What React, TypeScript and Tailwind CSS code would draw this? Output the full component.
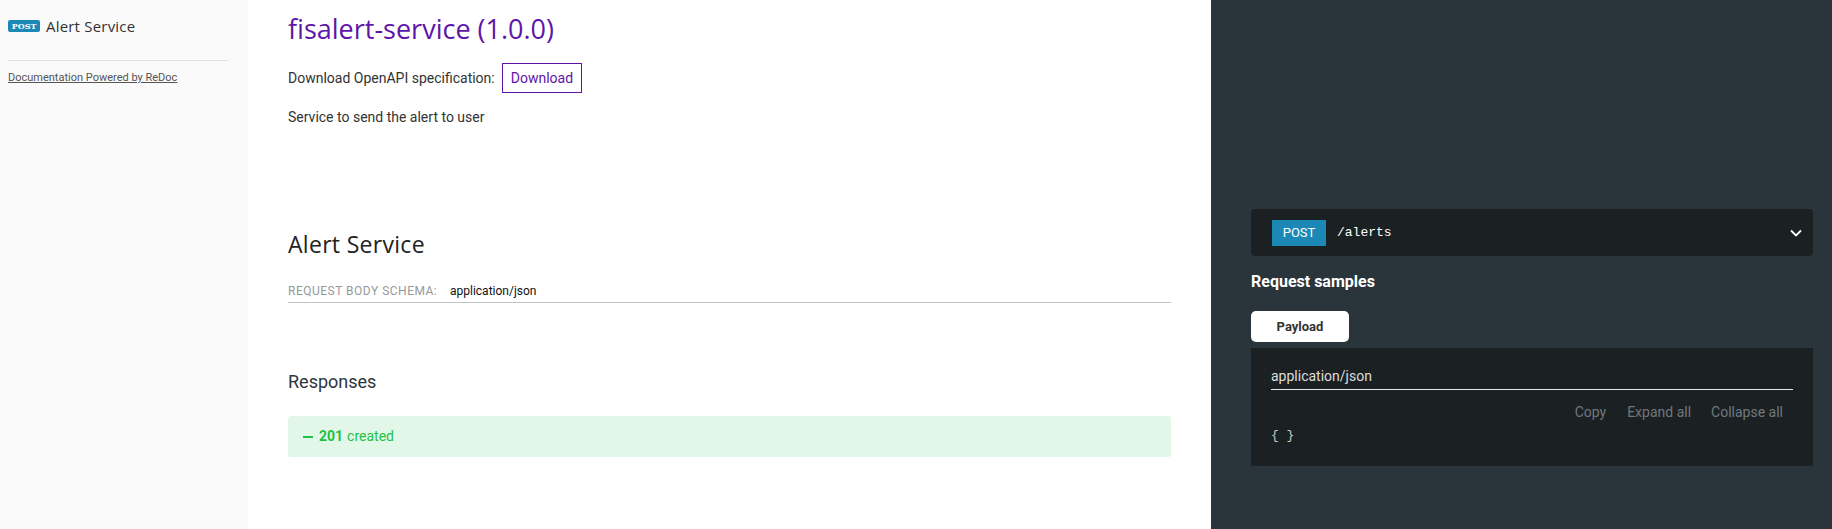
import React from "react";

const roboto = { fontFamily: "Roboto, 'Liberation Sans', sans-serif" };

export default function App() {
  return (
    <div className="flex h-[529px] w-[1832px] overflow-hidden" style={roboto}>
      {/* Sidebar */}
      <aside className="w-[248px] shrink-0 bg-[#fafafa]">
        <div className="flex items-center pl-[8px] pt-[17px]">
          <span
            className="flex h-[12px] w-[32px] items-center justify-center rounded-[2px] bg-[#1b88b5] text-[8px] font-bold leading-none text-white"
            style={{ fontFamily: "'DejaVu Serif', serif" }}
          >
            POST
          </span>
          <span
            className="ml-[6px] text-[15px] leading-[18px] tracking-[0.2px] text-[#333333]"
            style={{ fontFamily: "'Open Sans', sans-serif" }}
          >
            Alert Service
          </span>
        </div>
        <div className="ml-[8px] mr-[20px] mt-[25px] border-t border-[#e1e1e1]" />
        <div className="pl-[8px] pt-[3px]">
          <a className="text-[11px] leading-[14px] text-[#555555] underline">
            Documentation Powered by ReDoc
          </a>
        </div>
      </aside>

      {/* Middle */}
      <main className="w-[963px] shrink-0 bg-white px-[40px] pt-[13px]">
        <h1
          className="text-[27px] leading-[31px] text-[#5e16a8]"
          style={{ fontFamily: "'Open Sans', sans-serif" }}
        >
          fisalert-service (1.0.0)
        </h1>
        <div className="mt-[19px] flex h-[30px] items-center text-[14px] text-[#333333]">
          <span>Download OpenAPI specification:</span>
          <span className="ml-[7px] flex h-[30px] items-center border border-[#5e16a8] px-[8px] text-[#5e16a8]">
            Download
          </span>
        </div>
        <p className="mt-[14px] text-[14px] leading-[20px] text-[#333333]">
          Service to send the alert to user
        </p>
        <h2
          className="mt-[103px] text-[23px] leading-[28px] tracking-[0.3px] text-[#222222]"
          style={{ fontFamily: "'Open Sans', sans-serif" }}
        >
          Alert Service
        </h2>
        <div className="mt-[23px] flex items-center whitespace-nowrap border-b border-[#c4c4c4] pb-[1px] text-[12px] leading-[20px]">
          <span className="w-[162px] uppercase tracking-[0.5px] text-[#95999b]">Request Body Schema:</span>
          <span className="text-[#111111]">application/json</span>
        </div>
        <h3 className="mt-[67px] text-[18px] leading-[24px] text-[#2d3640]">Responses</h3>
        <div className="mt-[22px] flex h-[41px] items-center rounded-[3px] bg-[#e3f7e8] pl-[15px] text-[14px] text-[#1dc246]">
          <span className="mr-[6px] inline-block h-[2px] w-[10px] bg-[#1dc246]" />
          <span className="font-bold">201</span>
          <span className="ml-[4px]">created</span>
        </div>
      </main>

      {/* Right panel */}
      <section className="flex-1 bg-[#2a343b] pl-[40px] pr-[19px] pt-[209px]">
        <div className="flex h-[47px] items-center rounded-[4px] bg-[#1b2023] pl-[21px] pr-[11px]">
          <span className="flex h-[26px] w-[54px] items-center justify-center bg-[#1b88b5] text-[13px] text-white">
            POST
          </span>
          <span
            className="ml-[11px] text-[13px] text-white"
            style={{ fontFamily: "'Liberation Mono', 'Courier New', monospace" }}
          >
            /alerts
          </span>
          <svg className="ml-auto" width="12" height="8" viewBox="0 0 12 8">
            <path d="M1 1.5 L6 6.5 L11 1.5" stroke="white" strokeWidth="1.8" fill="none" />
          </svg>
        </div>
        <h3 className="mt-[16px] text-[16px] font-bold leading-[20px] text-white">Request samples</h3>
        <div className="mt-[19px] flex">
          <span className="flex h-[31px] w-[98px] items-center justify-center rounded-[5px] bg-white text-[13px] font-bold text-[#333333]">
            Payload
          </span>
        </div>
        <div className="mt-[6px] h-[118px] bg-[#1b2023] px-[20px] pt-[18px]">
          <div className="border-b border-[#e8e8e8] pb-[3px] text-[14px] leading-[20px] text-[#dddddd]">
            application/json
          </div>
          <div className="mt-[12px] flex justify-end pr-[10px] text-[14px] leading-[20px] text-[#70787d]">
            <span>Copy</span>
            <span className="ml-[21px]">Expand all</span>
            <span className="ml-[20px]">Collapse all</span>
          </div>
          <div
            className="mt-[4px] text-[13px] leading-[20px] text-[#c8c8c8]"
            style={{ fontFamily: "'Liberation Mono', monospace" }}
          >
            {"{ }"}
          </div>
        </div>
      </section>
    </div>
  );
}
